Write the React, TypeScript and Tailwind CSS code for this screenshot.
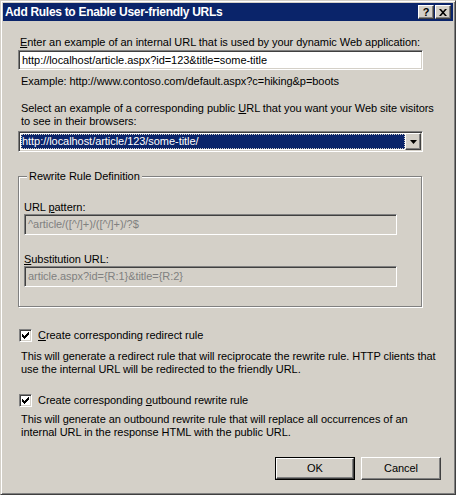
import React from 'react';

const font = { fontFamily: '"Liberation Sans", Arial, sans-serif' };

const sunken =
  'border border-t-[#808080] border-l-[#808080] border-r-white border-b-white shadow-[inset_1px_1px_0_#404040,inset_-1px_-1px_0_#d4d0c8]';
const raised =
  'border border-t-white border-l-white border-r-[#404040] border-b-[#404040] shadow-[inset_-1px_-1px_0_#808080]';

const Check: React.FC<{ label: React.ReactNode }> = ({ label }) => (
  <div className="flex items-center h-[13px]">
    <div className={`w-[13px] h-[13px] bg-white flex items-center justify-center ml-px ${sunken}`}>
      <svg width="7" height="7" viewBox="0 0 7 7">
        <path d="M0 2h1v1h1v1h1v-1h1v-1h1v-1h1v-1h1v3h-1v1h-1v1h-1v1h-1v1h-1v-1h-1v-1h-1z" fill="#000" />
      </svg>
    </div>
    <span className="ml-[6px] leading-[13px]">{label}</span>
  </div>
);

export default function App() {
  return (
    <div
      className="w-[456px] h-[495px] overflow-hidden bg-[#d4d0c8] border border-t-[#d4d0c8] border-l-[#d4d0c8] border-r-[#404040] border-b-[#404040] shadow-[inset_1px_1px_0_#ffffff,inset_-1px_-1px_0_#808080] p-[2px] text-[11px] tracking-[-0.05px] whitespace-nowrap text-black flex flex-col"
      style={font}
    >
      {/* Title bar */}
      <div className="h-[18px] bg-[#0a246a] flex items-center pl-[2px] pr-[2px] shrink-0">
        <span className="flex-1 text-white font-bold text-[12px] leading-[18px] tracking-[-0.3px]">
          Add Rules to Enable User-friendly URLs
        </span>
        <div className={`w-[16px] h-[14px] bg-[#d4d0c8] flex items-center justify-center font-bold text-[11px] leading-none ${raised}`}>
          ?
        </div>
        <div className={`w-[16px] h-[14px] bg-[#d4d0c8] flex items-center justify-center ml-px ${raised}`}>
          <svg width="8" height="7" viewBox="0 0 8 7">
            <path d="M0 0h2l2 2.3L6 0h2L5 3.5 8 7H6L4 4.7 2 7H0l3-3.5z" fill="#000" />
          </svg>
        </div>
      </div>

      {/* Content */}
      <div className="ml-[15px] w-[405px] flex flex-col">
        <div className="mt-[15px] h-[13px] leading-[13px] pl-[2px]">
          <span className="underline">E</span>nter an example of an internal URL that is used by your dynamic Web application:
        </div>
        <div className={`mt-px h-[20px] bg-white flex items-center pl-[3px] ${sunken}`}>
          http://localhost/article.aspx?id=123&amp;title=some-title
        </div>
        <div className="mt-[5px] h-[13px] leading-[13px] pl-[3px]">
          Example: http://www.contoso.com/default.aspx?c=hiking&amp;p=boots
        </div>
        <div className="mt-[14px] leading-[13px] pl-[3px]">
          Select an example of a corresponding public <span className="underline">U</span>RL that you want your Web site visitors
          <br />
          to see in their browsers:
        </div>
        <div className={`mt-[3px] h-[21px] bg-white flex p-[2px] ${sunken}`}>
          <div className="flex-1 bg-[#0a246a] text-white flex items-center pl-px outline-1 outline-dotted outline-[#d4d0c8] -outline-offset-1">
            http://localhost/article/123/some-title/
          </div>
          <div className={`w-[16px] bg-[#d4d0c8] flex items-center justify-center -my-px -mr-px ${raised}`}>
            <svg width="7" height="4" viewBox="0 0 7 4">
              <path d="M0 0h7L3.5 4z" fill="#000" />
            </svg>
          </div>
        </div>

        {/* Group box */}
        <div className="relative mt-[24px] h-[131px] w-[404px] border border-[#808080] shadow-[inset_1px_1px_0_#ffffff,1px_1px_0_#ffffff] pl-[5px] pr-[24px] flex flex-col">
          <span className="absolute -top-[7px] left-[8px] bg-[#d4d0c8] px-[2px] leading-[13px]">
            Rewrite Rule Definition
          </span>
          <div className="mt-[24px] h-[13px] leading-[13px]">
            URL <span className="underline">p</span>attern:
          </div>
          <div className={`h-[21px] bg-[#d4d0c8] text-[#808080] flex items-center pl-[3px] ${sunken}`}>
            ^article/([^/]+)/([^/]+)/?$
          </div>
          <div className="mt-[18px] h-[13px] leading-[13px]">
            <span className="underline">S</span>ubstitution URL:
          </div>
          <div className={`h-[21px] bg-[#d4d0c8] text-[#808080] flex items-center pl-[3px] ${sunken}`}>
            article.aspx?id={'{R:1}'}&amp;title={'{R:2}'}
          </div>
        </div>

        <div className="mt-[22px]">
          <Check label={<><span className="underline">C</span>reate corresponding redirect rule</>} />
        </div>
        <div className="mt-[8px] leading-[13px] pl-[3px]">
          This will generate a redirect rule that will reciprocate the rewrite rule. HTTP clients that
          <br />
          use the internal URL will be redirected to the friendly URL.
        </div>
        <div className="mt-[18px]">
          <Check label={<>Create corresponding <span className="underline">o</span>utbound rewrite rule</>} />
        </div>
        <div className="mt-[6px] leading-[13px] pl-[3px]">
          This will generate an outbound rewrite rule that will replace all occurrences of an
          <br />
          internal URL in the response HTML with the public URL.
        </div>
      </div>

      {/* Buttons */}
      <div className="mt-[18px] flex justify-end gap-[6px] pr-[12px]">
        <div className="w-[80px] h-[23px] border border-black">
          <div className={`w-full h-full flex items-center justify-center bg-[#d4d0c8] ${raised}`}>OK</div>
        </div>
        <div className={`w-[80px] h-[23px] flex items-center justify-center bg-[#d4d0c8] ${raised}`}>Cancel</div>
      </div>
    </div>
  );
}
